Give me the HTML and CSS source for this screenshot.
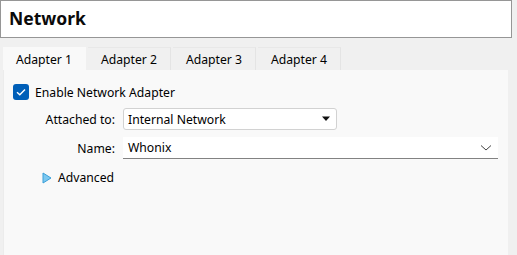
FILE: index.html
```html
<!doctype html>
<html>
<head>
<meta charset="utf-8">
<title>Network</title>
<link rel="stylesheet" href="styles.css">
</head>
<body>
<div id="header">
	<div class="title">Network</div>
</div>
<div id="tabs">
	<div class="tab active">Adapter 1</div>
	<div class="tab">Adapter 2</div>
	<div class="tab">Adapter 3</div>
	<div class="tab">Adapter 4</div>
</div>
<div id="panel">
	<div class="checkRow">
		<span class="checkbox">
			<svg width="16" height="16" viewBox="0 0 16 16"><path d="M4 8.2 L6.8 10.8 L12 5.4" fill="none" stroke="#fff" stroke-width="1.4"/></svg>
		</span>
		<span>Enable Network Adapter</span>
	</div>
	<div class="formGrid">
		<label>Attached to:</label>
		<div class="combo">
			<span>Internal Network</span>
			<svg width="10" height="6" viewBox="0 0 10 6"><path d="M1 0.5 L9 0.5 L5 5 Z" fill="#111"/></svg>
		</div>
		<label>Name:</label>
		<div class="editCombo">
			<span>Whonix</span>
			<svg width="12" height="8" viewBox="0 0 12 8"><path d="M1 1.5 L6 6 L11 1.5" fill="none" stroke="#444" stroke-width="1"/></svg>
		</div>
	</div>
	<div class="advanced">
		<svg width="10" height="12" viewBox="0 0 10 12"><path d="M1 1 L9 6 L1 11 Z" fill="#7cc8f0" stroke="#3a9fd8" stroke-width="1"/></svg>
		<span>Advanced</span>
	</div>
</div>
</body>
</html>
```
FILE: styles.css
```css
body {
	margin: 0;
	background-color: rgb(240,240,240);
	font-family: "Noto Sans", "Open Sans", sans-serif;
	font-size: 12.2px;
	color: rgb(0,0,0);
	overflow: hidden;
}

#header {
	margin: 0px 5px 0px 0px;
	height: 36px;
	background-color: rgb(255,255,255);
	border: 1px solid rgb(150,150,150);
	display: flex;
	align-items: center;
}

.title {
	padding-left: 8px;
	padding-bottom: 2px;
	font-size: 17.5px;
	font-weight: bold;
	color: rgb(10,10,10);
}

#tabs {
	display: flex;
	margin: 9px 0px 0px 3px;
	height: 23px;
}

.tab {
	width: 82px;
	margin-right: 2px;
	display: flex;
	align-items: center;
	justify-content: center;
	background-color: rgb(240,240,240);
	border-top: 1px solid rgb(232,232,232);
	border-right: 1px solid rgb(228,228,228);
}

.tab.active {
	background-color: rgb(249,249,249);
	border-color: rgb(249,249,249);
}

#panel {
	margin: 0px 9px 0px 3px;
	height: 172px;
	background-color: rgb(249,249,249);
	border-left: 1px solid rgb(236,236,236);
	padding: 13px 0px 0px 9px;
}

.checkRow {
	display: flex;
	align-items: center;
	gap: 6px;
	height: 18px;
}

.checkbox {
	width: 16px;
	height: 16px;
	border-radius: 3px;
	background-color: rgb(0,95,184);
	display: flex;
}

.formGrid {
	display: grid;
	grid-template-columns: 102px 375px;
	column-gap: 8px;
	row-gap: 7px;
	margin-top: 7px;
	align-items: center;
}

label {
	text-align: right;
}

.combo {
	width: 203px;
	height: 20px;
	background-color: rgb(255,255,255);
	border: 1px solid rgb(210,210,210);
	border-radius: 3px;
	display: flex;
	align-items: center;
	justify-content: space-between;
	padding: 0px 5px 0px 4px;
}

.editCombo {
	height: 21px;
	background-color: rgb(255,255,255);
	border-bottom: 1px solid rgb(130,130,130);
	display: flex;
	align-items: center;
	justify-content: space-between;
	padding: 0px 6px 0px 5px;
}

.advanced {
	display: flex;
	align-items: center;
	gap: 6px;
	margin: 10px 0px 0px 29px;
}
```
